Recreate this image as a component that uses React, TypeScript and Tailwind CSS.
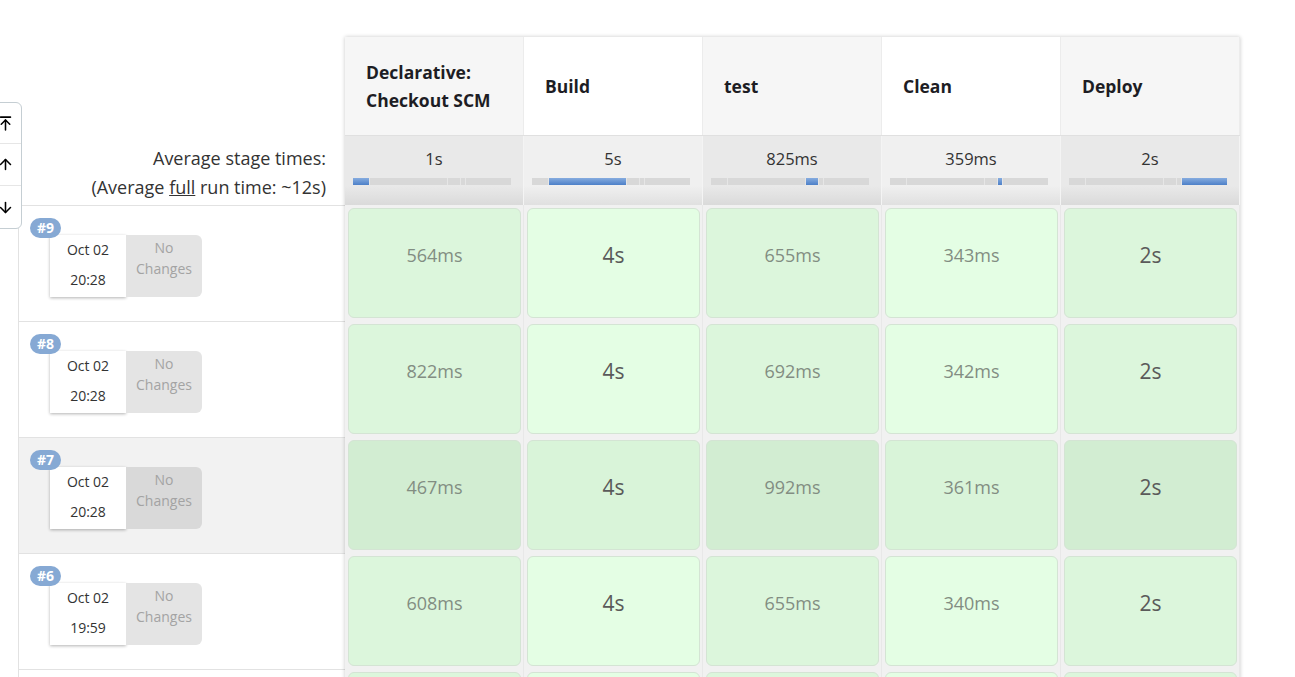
import { ArrowDown, ArrowUp, ArrowUpToLine } from "lucide-react";

const stages = [
  { name: ["Declarative:", "Checkout SCM"], avg: "1s" },
  { name: ["Build"], avg: "5s" },
  { name: ["test"], avg: "825ms" },
  { name: ["Clean"], avg: "359ms" },
  { name: ["Deploy"], avg: "2s" },
];

// widths of each stage inside the 158px avg bar
const segments = [16, 79, 13, 4, 46];

type Build = { id: number; date: string; time: string; times: string[]; hover?: boolean };

const builds: Build[] = [
  { id: 9, date: "Oct 02", time: "20:28", times: ["564ms", "4s", "655ms", "343ms", "2s"] },
  { id: 8, date: "Oct 02", time: "20:28", times: ["822ms", "4s", "692ms", "342ms", "2s"] },
  { id: 7, date: "Oct 02", time: "20:28", times: ["467ms", "4s", "992ms", "361ms", "2s"], hover: true },
  { id: 6, date: "Oct 02", time: "19:59", times: ["608ms", "4s", "655ms", "340ms", "2s"] },
  // next row only peeks in at the bottom edge
  { id: 5, date: "", time: "", times: ["", "", "", "", ""] },
];

function AvgBar({ active }: { active: number }) {
  return (
    <div className="flex h-[7px] w-[158px] gap-px bg-[#e6e6e6]">
      {segments.map((w, i) => (
        <div
          key={i}
          style={{ width: w }}
          className={
            i === active
              ? "h-full bg-[linear-gradient(to_bottom,#86acdf,#4d80c8)]"
              : "h-full bg-[#d8d8d8]"
          }
        />
      ))}
    </div>
  );
}

function BuildLabel({ b }: { b: Build }) {
  if (!b.date) return null;
  return (
    <div className="relative h-full">
      <span className="absolute left-[11px] top-[12px] z-10 rounded-full bg-[#86a9d4] px-[7px] text-[14px] font-bold leading-[20px] text-white">
        #{b.id}
      </span>
      <div className="absolute left-[31px] top-[29px] flex">
        <div className="h-[62px] w-[76px] bg-white text-center text-[14px] leading-[30px] text-[#333] shadow-[0_1px_3px_rgba(0,0,0,0.3)]">
          <div>{b.date}</div>
          <div>{b.time}</div>
        </div>
        <div
          className={`h-[62px] w-[76px] rounded-r-md pt-[2px] text-center text-[14px] leading-[21px] text-[#a3a3a3] ${
            b.hover ? "bg-[#d9d9d9]" : "bg-[#e4e4e4]"
          }`}
        >
          <div>No</div>
          <div>Changes</div>
        </div>
      </div>
    </div>
  );
}

export default function App() {
  return (
    <div className="relative h-[677px] overflow-hidden bg-white font-['Open_Sans',sans-serif] text-[#333]">
      {/* scroll tray */}
      <div className="absolute left-[-12px] top-[102px] z-20 flex w-[34px] flex-col rounded-r-md border border-[#c5ced3] bg-white">
        <div className="flex h-[41px] items-center justify-center border-b border-[#e6e6e6]">
          <ArrowUpToLine size={17} strokeWidth={2.2} className="text-black" />
        </div>
        <div className="flex h-[42px] items-center justify-center border-b border-[#e6e6e6]">
          <ArrowUp size={17} strokeWidth={2.2} className="text-black" />
        </div>
        <div className="flex h-[42px] items-center justify-center">
          <ArrowDown size={17} strokeWidth={2.2} className="text-black" />
        </div>
      </div>

      <div className="ml-[18px] flex pt-[37px]">
        {/* left column */}
        <div className="flex w-[327px] flex-col">
          <div className="h-[98px]" />
          <div className="h-[70px] pr-[19px] pt-[9px] text-right text-[18px] leading-[29px] text-[#333]">
            <div>Average stage times:</div>
            <div>
              (Average <span className="underline">full</span> run time: ~12s)
            </div>
          </div>
          {builds.map((b) => (
            <div
              key={b.id}
              className={`h-[116px] border-l border-t border-[#e2e2e2] ${b.hover ? "bg-[#f2f2f2]" : "bg-white"}`}
            >
              <BuildLabel b={b} />
            </div>
          ))}
        </div>

        {/* stage table */}
        <div className="flex flex-col shadow-[0_0_4px_rgba(0,0,0,0.22)]">
          <div className="flex h-[98px]">
            {stages.map((s, i) => (
              <div
                key={i}
                className={`flex w-[179px] items-center border-r border-[#ececec] pl-[21px] text-[17.5px] font-bold leading-[28px] text-[#1d1d24] ${
                  i % 2 === 0 ? "bg-[#f6f6f6]" : "bg-white"
                }`}
              >
                <div>
                  {s.name.map((n) => (
                    <div key={n}>{n}</div>
                  ))}
                </div>
              </div>
            ))}
          </div>
          <div className="flex h-[70px] border-t border-[#e0e0e0]">
            {stages.map((s, i) => (
              <div
                key={i}
                className={`flex w-[179px] flex-col items-center border-r border-[#f4f4f4] pt-[10px] ${
                  i % 2 === 0
                    ? "bg-[linear-gradient(to_bottom,#e9e9e9_0%,#e9e9e9_72%,#dadada_100%)]"
                    : "bg-[linear-gradient(to_bottom,#f0f0f0_0%,#f0f0f0_72%,#e0e0e0_100%)]"
                }`}
              >
                <div className="text-[16.5px] leading-[26px] text-[#333]">{s.avg}</div>
                <div className="mt-[6px] pr-[4px]">
                  <AvgBar active={i} />
                </div>
              </div>
            ))}
          </div>
          {builds.map((b) => (
            <div key={b.id} className="flex h-[116px] bg-[#f1f1f1]">
              {b.times.map((t, i) => {
                const big = t.endsWith("s") && !t.endsWith("ms");
                const odd = i % 2 === 0;
                const bg = b.hover
                  ? odd
                    ? "bg-[#d2edd2]"
                    : "bg-[#d9f4d9]"
                  : odd
                    ? "bg-[#dcf6dc]"
                    : "bg-[#e4fee4]";
                return (
                  <div key={i} className="w-[179px] border-r border-[#e8e8e8] p-[3px] pr-[2px]">
                    <div
                      className={`flex h-full justify-center rounded-md border border-[#d4e4d4] ${bg} ${
                        big
                          ? "pt-[32px] text-[21px] leading-[28px] text-[#5a5a5a]"
                          : "pt-[34px] text-[18px] leading-[24px] text-[#828d82]"
                      }`}
                    >
                      {t}
                    </div>
                  </div>
                );
              })}
            </div>
          ))}
        </div>
      </div>
    </div>
  );
}
